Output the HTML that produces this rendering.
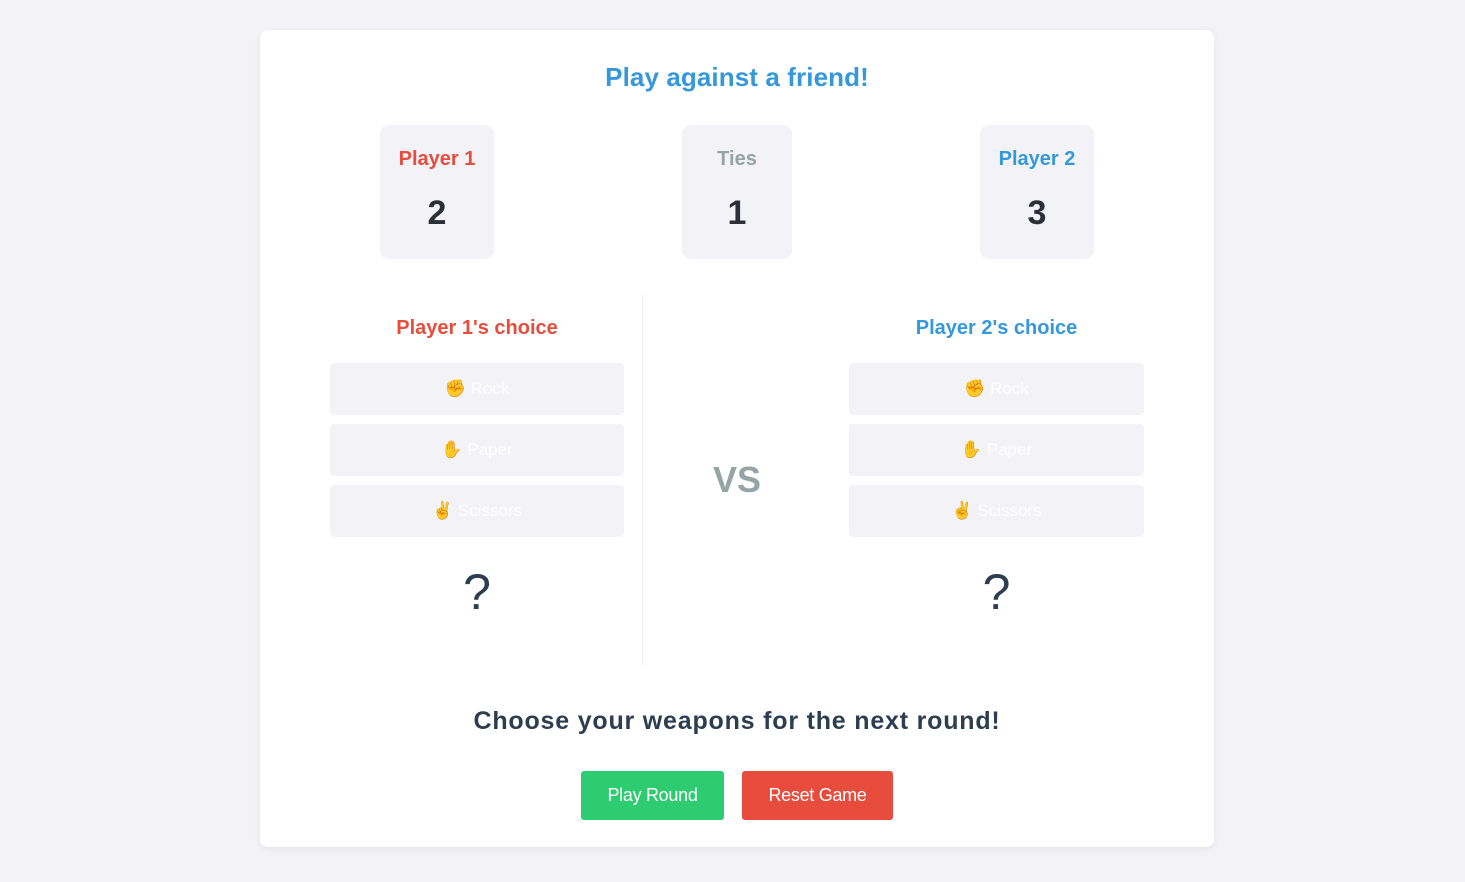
<!DOCTYPE html>
<html><head><meta charset="utf-8"><style>
*{box-sizing:border-box;margin:0;padding:0}
body{width:1465px;height:882px;background:#f3f3f7;font-family:"Liberation Sans",Arial,sans-serif;position:relative}
.card{position:absolute;left:260px;top:30px;width:954px;height:817px;background:#fff;border-radius:8px;box-shadow:0 2px 8px rgba(0,0,0,.06)}
.ctr{position:absolute;left:260px;width:954px;text-align:center}
h1{top:62px;color:#3498db;font-size:26px;font-weight:bold;letter-spacing:.1px}
.sc{position:absolute;top:125px;height:134px;background:#f3f3f7;border-radius:9px;text-align:center}
.sc .t{margin-top:23px;font-size:20px;font-weight:bold}
.sc .n{margin-top:23px;font-size:34px;font-weight:bold;color:#2c2f36}
.col{position:absolute;top:295px;width:295px;text-align:center}
.col h3{font-size:20px;font-weight:bold;margin-top:22px}
.btn{height:52px;background:#f3f3f7;border-radius:4px;margin-top:9px;color:#fff;font-size:17px;line-height:52px;text-align:center}
.col .b1{margin-top:23px}
.q{font-size:50px;color:#2c3e50;margin-top:26px}
.div{position:absolute;left:642px;top:295px;width:1px;height:370px;background:#ececf0}
.vs{top:459px;font-size:36px;font-weight:bold;color:#95a5a6}
.msg{top:707px;font-size:25px;font-weight:bold;color:#2c3e50;letter-spacing:.8px}
.pb{position:absolute;top:771px;height:49px;color:#fff;font-size:18px;line-height:49px;text-align:center;border-radius:3px;letter-spacing:-.3px}
</style></head><body>
<div class="card"></div>
<h1 class="ctr">Play against a friend!</h1>
<div class="sc" style="left:380px;width:114px"><div class="t" style="color:#e74c3c">Player 1</div><div class="n">2</div></div>
<div class="sc" style="left:682px;width:110px"><div class="t" style="color:#95a5a6">Ties</div><div class="n">1</div></div>
<div class="sc" style="left:980px;width:114px"><div class="t" style="color:#3498db">Player 2</div><div class="n">3</div></div>
<div class="col" style="left:330px;width:294px"><h3 style="color:#e74c3c">Player 1's choice</h3>
<div class="btn b1">✊ Rock</div><div class="btn">✋ Paper</div><div class="btn">✌️ Scissors</div><div class="q">?</div></div>
<div class="div"></div>
<div class="vs ctr">VS</div>
<div class="col" style="left:849px"><h3 style="color:#3498db">Player 2's choice</h3>
<div class="btn b1">✊ Rock</div><div class="btn">✋ Paper</div><div class="btn">✌️ Scissors</div><div class="q">?</div></div>
<div class="msg ctr">Choose your weapons for the next round!</div>
<div class="pb" style="left:581px;width:143px;background:#2ecc71">Play Round</div>
<div class="pb" style="left:742px;width:151px;background:#e74c3c">Reset Game</div>
</body></html>
